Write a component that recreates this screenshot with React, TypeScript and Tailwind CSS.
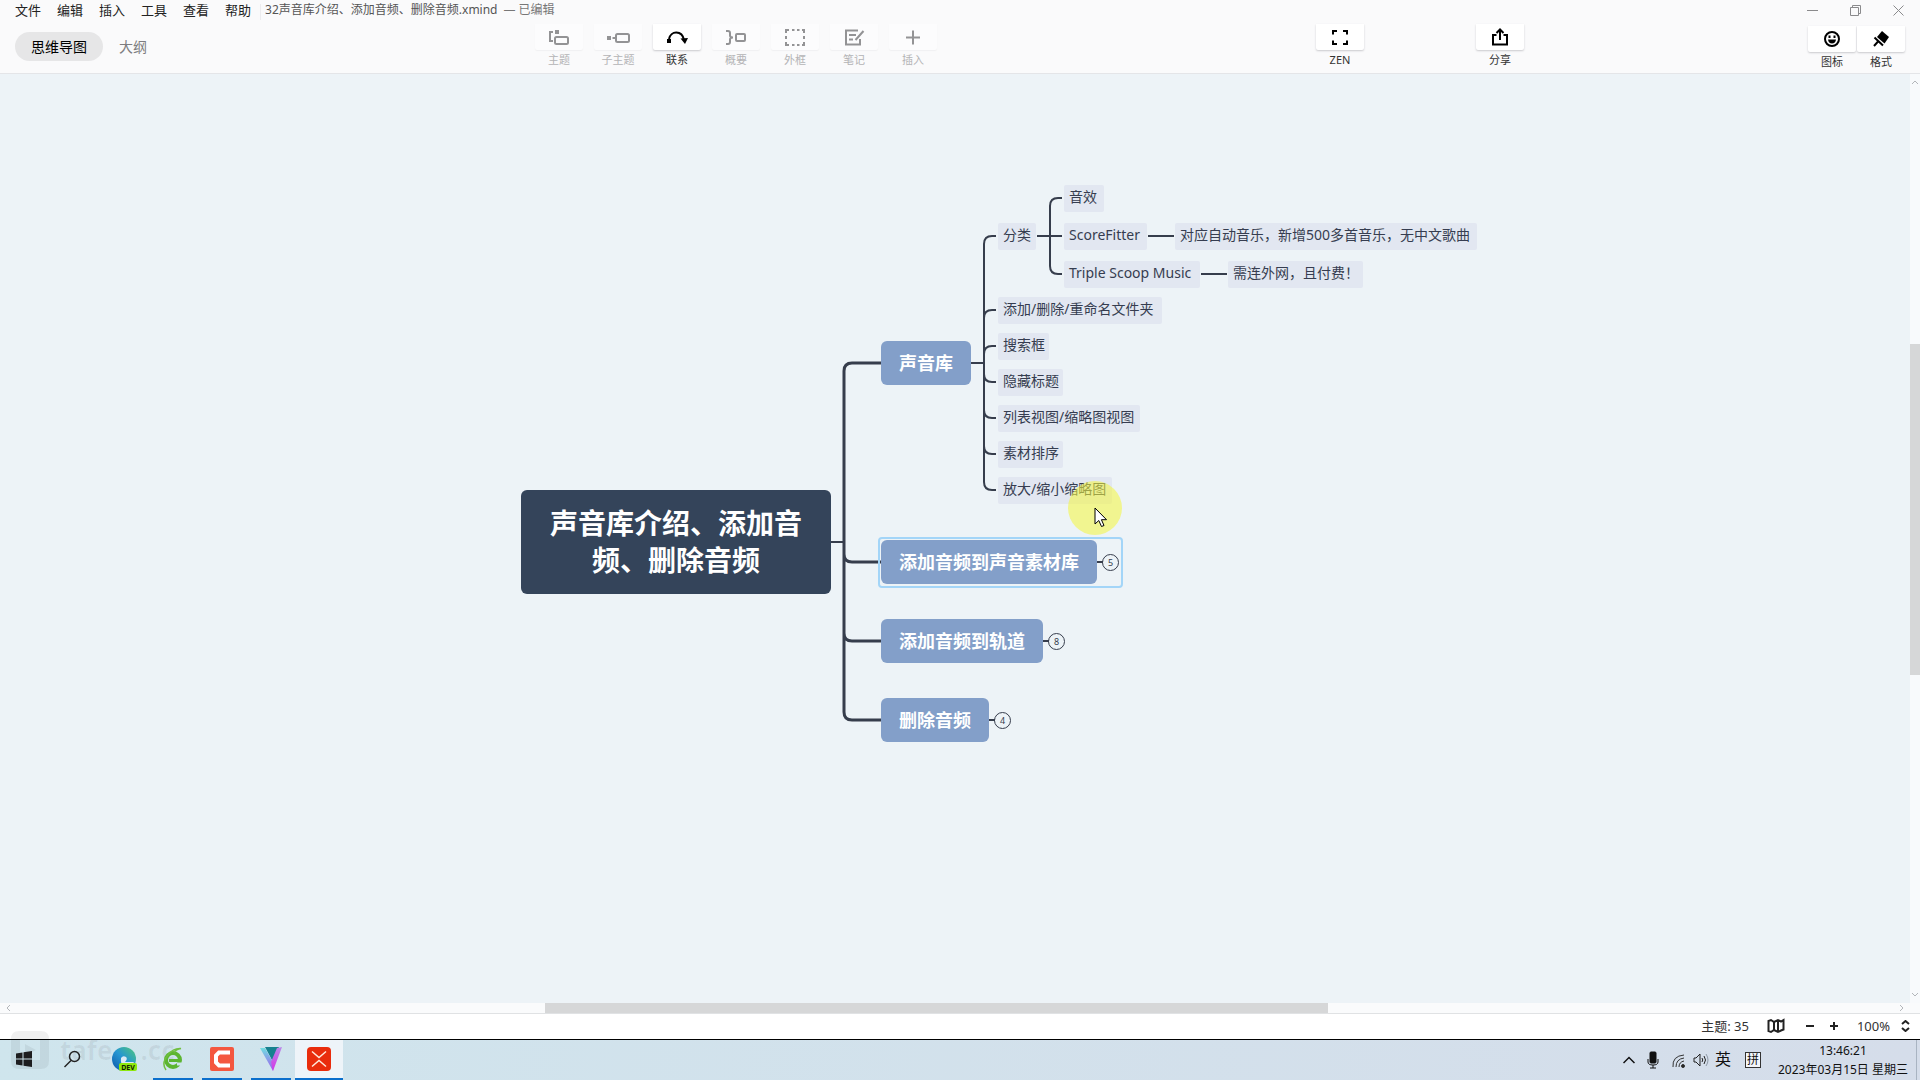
import type { ReactNode } from "react";
import clsx from "clsx";

type ToolProps = {
  label: string;
  children: ReactNode;
  disabled?: boolean;
};

const MENUS = ["文件", "编辑", "插入", "工具", "查看", "帮助"];

// centre line of every small topic is y
const TOPICS = [
  { text: "音效", x: 1064, y: 198, w: 40 },
  { text: "分类", x: 998, y: 236, w: 38 },
  { text: "ScoreFitter", x: 1064, y: 236, w: 83 },
  { text: "对应自动音乐，新增500多首音乐，无中文歌曲", x: 1175, y: 236, w: 302 },
  { text: "Triple Scoop Music", x: 1064, y: 274, w: 136 },
  { text: "需连外网，且付费！", x: 1228, y: 274, w: 135 },
  { text: "添加/删除/重命名文件夹", x: 998, y: 310, w: 164 },
  { text: "搜索框", x: 998, y: 346, w: 51 },
  { text: "隐藏标题", x: 998, y: 382, w: 65 },
  { text: "列表视图/缩略图视图", x: 998, y: 418, w: 142 },
  { text: "素材排序", x: 998, y: 454, w: 65 },
  { text: "放大/缩小缩略图", x: 998, y: 490, w: 114 },
];

const BRANCHES = [
  { text: "声音库", y: 363, w: 90 },
  { text: "添加音频到声音素材库", y: 562, w: 216, count: 5 },
  { text: "添加音频到轨道", y: 641, w: 162, count: 8 },
  { text: "删除音频", y: 720, w: 108, count: 4 },
];

const CANVAS_TOP = 74;

function Tool({ label, children, disabled }: ToolProps) {
  return (
    <button
      type="button"
      disabled={disabled}
      className={clsx(
        "flex w-12 flex-col items-center gap-0.5 text-[11px] leading-4",
        disabled ? "text-[#b4b4b6]" : "text-[#333333]",
      )}
    >
      <span
        className={clsx(
          "flex h-[26px] w-full items-center justify-center rounded-b-xs",
          disabled
            ? "bg-[#fcfcfd] text-[#939395] shadow-[0_1px_1px_#f0f0f2]"
            : "bg-white text-black shadow-[0_1px_2px_#c9c9cd]",
        )}
      >
        {children}
      </span>
      {label}
    </button>
  );
}

function Icon({ children, w = 22 }: { children: ReactNode; w?: number }) {
  return (
    <svg
      width={w}
      height="20"
      viewBox={`0 0 ${w} 20`}
      fill="none"
      stroke="currentColor"
      strokeWidth="2"
      aria-hidden="true"
    >
      {children}
    </svg>
  );
}

function TitleBar() {
  return (
    <div className="flex h-6 items-center pl-[15px] text-[13px] leading-5 text-[#222222]">
      <nav className="flex gap-4">
        {MENUS.map((m) => (
          <button key={m} type="button" className="pb-1">
            {m}
          </button>
        ))}
      </nav>
      <div className="ml-[9px] h-4 w-px bg-[#ececee]" />
      <span className="ml-1 pb-1 text-xs leading-5 text-[#555555]">
        32声音库介绍、添加音频、删除音频.xmind
      </span>
      <span className="ml-[6px] pb-1 text-xs leading-5 text-[#777777]">— 已编辑</span>
      <div className="ml-auto flex items-center gap-8 pr-4 pb-1 text-[#8a8a8c]">
        <button type="button" aria-label="最小化">
          <svg width="11" height="11" viewBox="0 0 11 11" stroke="currentColor">
            <path d="M0 5.5h11" />
          </svg>
        </button>
        <button type="button" aria-label="还原">
          <svg width="11" height="11" viewBox="0 0 11 11" fill="none" stroke="currentColor">
            <path d="M.5 2.5h8v8h-8zM2.5 2.5v-2h8v8h-2" />
          </svg>
        </button>
        <button type="button" aria-label="关闭">
          <svg width="11" height="11" viewBox="0 0 11 11" stroke="currentColor">
            <path d="M.5.5l10 10M10.5.5l-10 10" />
          </svg>
        </button>
      </div>
    </div>
  );
}

function Toolbar() {
  return (
    <div className="flex h-[49px] items-start">
      <div className="mt-2 ml-[15px] flex w-[519px] items-center text-sm leading-5">
        <button type="button" className="h-[29px] rounded-full bg-[#e6e6e7] px-4 text-black">
          思维导图
        </button>
        <button type="button" className="ml-4 text-[#7d7d80]">
          大纲
        </button>
      </div>
      <div className="ml-px flex gap-[11px]">
        <Tool label="主题" disabled>
          <Icon>
            <path d="M5 5H2v9h3" />
            <rect x="7" y="3" width="4" height="4" fill="currentColor" stroke="none" />
            <rect x="7" y="10" width="13" height="7" rx="1.5" />
          </Icon>
        </Tool>
        <Tool label="子主题" disabled>
          <Icon w={24}>
            <rect x="1" y="9" width="4" height="4" fill="currentColor" stroke="none" />
            <path d="M6.500 11h3" />
            <rect x="10" y="7" width="13" height="8" rx="1.5" />
          </Icon>
        </Tool>
        <Tool label="联系">
          <Icon>
            <path d="M3 12C4.500 3.500 16 3 18 13" />
            <rect x="1" y="12" width="4" height="4" fill="currentColor" stroke="none" />
            <path d="M14.500 11.500l7.500-.5-3 6z" fill="currentColor" stroke="none" />
          </Icon>
        </Tool>
        <Tool label="概要" disabled>
          <Icon>
            <path d="M1 4h2q2 0 2 2v2.500q0 2 3 2-3 0-3 2V15q0 2-2 2H1" />
            <rect x="11" y="7" width="9" height="7" rx="1" />
          </Icon>
        </Tool>
        <Tool label="外框" disabled>
          <Icon>
            <path d="M2 6V3h3M8 3h2.500M13 3h2.500M18 3h2v3M20 9v3M20 15v3h-2M15.500 18H13M10.500 18H8M5 18H2v-3M2 12V9" />
          </Icon>
        </Tool>
        <Tool label="笔记" disabled>
          <Icon>
            <path d="M15 3.500H3v14h14V12M6 8h7M6 12.500h4M20.500 4l-8 9" />
          </Icon>
        </Tool>
        <Tool label="插入" disabled>
          <Icon>
            <path d="M11 3.500v14M4 10.500h14" />
          </Icon>
        </Tool>
      </div>
      <div className="ml-[379px]">
        <Tool label="ZEN">
          <Icon w={20}>
            <path d="M3 7.500V4h4M13 4h4v3.500M17 13.500V17h-4M7 17H3v-3.500" />
          </Icon>
        </Tool>
      </div>
      <div className="ml-28">
        <Tool label="分享">
          <Icon w={20}>
            <path d="M6.500 8H3v9.500h14V8h-3.500M10 13V3M6.500 6L10 2.500 13.500 6" />
          </Icon>
        </Tool>
      </div>
      <div className="mt-[2px] mr-[15px] ml-auto flex gap-px">
        <Tool label="图标">
          <Icon w={20}>
            <circle cx="10" cy="10" r="7" />
            <path d="M6 10.500h8q-.5 4-4 4t-4-4z" fill="currentColor" stroke="none" />
            <path d="M7.500 6.500v2.500M12.500 6.500v2.500" />
          </Icon>
        </Tool>
        <Tool label="格式">
          <Icon w={20}>
            <path d="M11 2l7 6-4.500 6.500L6 8z" fill="currentColor" stroke="none" />
            <path d="M3.500 8.500l8.500 8M7.500 12L3 17" />
          </Icon>
        </Tool>
      </div>
    </div>
  );
}

function MindMap() {
  return (
    <main className="relative min-w-0 flex-1 overflow-hidden bg-[#edf3f7]">
      <svg className="absolute inset-0 h-full w-full" fill="none" stroke="#363d4c" aria-hidden="true">
        <g transform={`translate(0 ${-CANVAS_TOP})`}>
          <path
            strokeWidth="3"
            d="M881 363H852q-8 0-8 8V712q0 8 8 8h29M844 554q0 8 8 8h29M844 633q0 8 8 8h29"
          />
          <path
            strokeWidth="2"
            d="M831 542h13M971 363h13M996 236h-4q-8 0-8 8V482q0 8 8 8h4M984 318q0-8 8-8h4M984 354q0-8 8-8h4M984 374q0 8 8 8h4M984 410q0 8 8 8h4M984 446q0 8 8 8h4M1037 236h25M1062 198h-4q-8 0-8 8v60q0 8 8 8h4M1148 236h26M1201 274h26"
          />
          <path strokeWidth="2" d="M1097 562h6M1043 641h6M989 720h6" />
        </g>
      </svg>

      <h1 className="absolute top-[416px] left-[521px] flex h-[104px] w-[310px] items-center justify-center rounded-md bg-[#34445a] px-7 text-center text-[28px] leading-[37px] font-bold text-white">
        声音库介绍、添加音频、删除音频
      </h1>

      {TOPICS.map((t) => (
        <div
          key={t.text}
          className="absolute h-[27px] rounded-xs bg-[#e2e7f1] pt-0.5 pl-[5px] text-sm leading-5 whitespace-nowrap text-[#363d50]"
          style={{ left: t.x, top: t.y - CANVAS_TOP - 13, width: t.w }}
        >
          {t.text}
        </div>
      ))}

      <div className="absolute top-[463px] left-[878px] h-[51px] w-[245px] rounded-sm border-2 border-[#a3d5f8]" />
      {BRANCHES.map((b) => (
        <div key={b.text}>
          <div
            className="absolute left-[881px] flex h-11 items-center justify-center rounded-md bg-[#839fc9] text-lg leading-6 font-bold whitespace-nowrap text-white"
            style={{ top: b.y - CANVAS_TOP - 22, width: b.w }}
          >
            {b.text}
          </div>
          {b.count && (
            <button
              type="button"
              className="absolute flex size-[17px] items-center justify-center rounded-full border border-[#363d4c] text-[9px] leading-3 text-[#363d4c]"
              style={{ left: 881 + b.w + 5, top: b.y - CANVAS_TOP - 8 }}
            >
              {b.count}
            </button>
          )}
        </div>
      ))}

      {/* pointer with highlight */}
      <div className="absolute top-[407px] left-[1068px] size-[54px] rounded-full bg-[#f4f63c]/55" />
      <svg className="absolute top-[433px] left-[1094px]" width="14" height="21" viewBox="0 0 14 21">
        <path
          d="M1 1v16l3.800-3.500L7.500 19.500l2.500-1-2.600-5.800h5.100z"
          fill="white"
          stroke="black"
        />
      </svg>
    </main>
  );
}

function Chevron({ d }: { d: string }) {
  return (
    <svg width="8" height="8" viewBox="0 0 8 8" fill="none" stroke="#b3b6ba" aria-hidden="true">
      <path d={d} />
    </svg>
  );
}

function StatusBar() {
  return (
    <div className="flex h-[25px] items-center justify-end bg-white pr-[10px] pb-0.5 text-[13px] leading-5 text-[#333333]">
      <span>主题: 35</span>
      <button type="button" aria-label="导航" className="ml-[18px]">
        <svg width="18" height="16" viewBox="0 0 18 16" fill="none" stroke="#222" strokeWidth="2">
          <path d="M1.500 3v10l2.500 1 3-2 4 2 3-1.500 2.500-1V2L14 3.500 11 2 7 4 4 2zM7 4v8M11 2v12" />
        </svg>
      </button>
      <button type="button" aria-label="缩小" className="ml-5 h-5 w-[10px]">
        <svg width="10" height="10" viewBox="0 0 10 10" stroke="#222" strokeWidth="2">
          <path d="M1 5h8" />
        </svg>
      </button>
      <button type="button" aria-label="放大" className="ml-[14px] h-5 w-[10px]">
        <svg width="10" height="10" viewBox="0 0 10 10" stroke="#222" strokeWidth="2">
          <path d="M1 5h8M5 1v8" />
        </svg>
      </button>
      <button type="button" className="ml-[18px] flex items-center gap-[11px]">
        100%
        <svg width="9" height="12" viewBox="0 0 9 12" fill="none" stroke="#222" strokeWidth="2">
          <path d="M1 4l3.500-3L8 4M1 8l3.500 3L8 8" />
        </svg>
      </button>
    </div>
  );
}

function TaskItem({
  label,
  children,
  state,
}: {
  label: string;
  children: ReactNode;
  state?: "open" | "active";
}) {
  return (
    <button
      type="button"
      aria-label={label}
      className={clsx(
        "flex h-10 flex-col items-center justify-between",
        state === "active" && "bg-[#eef4f9]",
        state === "open" ? "w-[49px]" : "w-12",
      )}
    >
      <span className="flex h-[38px] items-center">{children}</span>
      {state && (
        <span className={clsx("h-0.5 bg-[#0b6fcc]", state === "active" ? "w-full" : "w-10")} />
      )}
    </button>
  );
}

function TaskBar() {
  return (
    <footer className="relative flex h-[41px] border-t border-black bg-linear-to-r from-[#cfe5ed] to-[#d5ddea]">
      <div className="absolute -top-[9px] left-[11px] flex items-center text-[26px] leading-9 font-bold text-black/6">
        <svg width="38" height="38" viewBox="0 0 38 38" fill="currentColor" aria-hidden="true">
          <path
            fillRule="evenodd"
            d="M8 0h22q8 0 8 8v22q0 8-8 8H8q-8 0-8-8V8q0-8 8-8zM9 9v20h20V9zM14 13l11 6-11 6z"
          />
        </svg>
        <span className="ml-[11px]">tafe</span>
        <span className="ml-7">.cc</span>
      </div>
      <div className="relative flex">
        <TaskItem label="开始">
          <svg width="16" height="16" viewBox="0 0 16 16" fill="#1d1d1f">
            <path d="M0 2.500l6.500-1v6H0zM7.500 1.300L16 0v7.500H7.500zM0 8.500h6.500v6L0 13.500zM7.500 8.500H16V16l-8.500-1.300z" />
          </svg>
        </TaskItem>
        <TaskItem label="搜索">
          <svg width="18" height="18" viewBox="0 0 18 18" fill="none" stroke="#222" strokeWidth="1.5">
            <circle cx="11.5" cy="6.5" r="5" />
            <path d="M8 10.500L1.500 17" />
          </svg>
        </TaskItem>
        <div className="w-1" />
        <TaskItem label="Edge Dev">
          <svg width="26" height="24" viewBox="0 0 26 24">
            <defs>
              <linearGradient id="edge" x1="0" y1="1" x2="1" y2="0">
                <stop offset="0" stopColor="#0b55a8" />
                <stop offset=".5" stopColor="#2596d2" />
                <stop offset="1" stopColor="#52c878" />
              </linearGradient>
            </defs>
            <circle cx="13" cy="12" r="12" fill="url(#edge)" />
            <path d="M10 11q2-3 5-1 2 2-1 5h9q-3 6-9 6-5-3-4-10z" fill="#dbe9f4" />
            <rect x="8" y="16" width="18" height="8" rx="2" fill="#8de80c" />
            <text x="17" y="22.5" textAnchor="middle" fontSize="7" fontWeight="700" fill="#122000">
              DEV
            </text>
          </svg>
        </TaskItem>
        <TaskItem label="浏览器" state="open">
          <svg width="22" height="24" viewBox="0 0 22 24" fill="none">
            <circle cx="11" cy="13" r="7" stroke="#5cb531" strokeWidth="4" />
            <path d="M7 13.500h12" stroke="#5cb531" strokeWidth="3" />
            <path d="M15 17h5" stroke="#cfe5ed" strokeWidth="3" />
            <path d="M4 23q-5-7 2-15Q11 1 19 1.500q-5 .5-7 4" stroke="#70bf3f" strokeWidth="1.5" />
          </svg>
        </TaskItem>
        <TaskItem label="Camtasia" state="open">
          <svg width="24" height="24" viewBox="0 0 24 24">
            <rect width="24" height="24" rx="2" fill="#f4573f" />
            <path d="M20 5.500H9l-3 3v7l3 3h11" fill="none" stroke="white" strokeWidth="4" />
          </svg>
        </TaskItem>
        <TaskItem label="VideoStudio" state="open">
          <svg width="22" height="24" viewBox="0 0 22 24">
            <defs>
              <linearGradient id="vs-left" x1="0" y1="0" x2="0" y2="1">
                <stop offset="0" stopColor="#6fdde0" />
                <stop offset="1" stopColor="#a35af0" />
              </linearGradient>
              <linearGradient id="vs-right" x1="0" y1="0" x2="0" y2="1">
                <stop offset="0" stopColor="#b98ae8" />
                <stop offset="1" stopColor="#d633e6" />
              </linearGradient>
            </defs>
            <path d="M5 0h14l-6 15z" fill="#16818f" />
            <path d="M0 1h5l9 16-1 7z" fill="url(#vs-left)" />
            <path d="M17 1l5-1-9 24-2-9z" fill="url(#vs-right)" />
          </svg>
        </TaskItem>
        <TaskItem label="XMind" state="active">
          <svg width="24" height="24" viewBox="0 0 24 24">
            <rect width="24" height="24" rx="4" fill="#e92c0c" />
            <path
              d="M5 4.500l7 6 7-6M5 19.500l7-6 7 6"
              fill="none"
              stroke="#ffe9dc"
              strokeWidth="1.5"
            />
          </svg>
        </TaskItem>
      </div>
      <div className="ml-auto flex items-center text-[#111111]">
        <svg width="12" height="8" viewBox="0 0 12 8" fill="none" stroke="currentColor" strokeWidth="1.5">
          <path d="M.5 7L6 1.500 11.500 7" />
        </svg>
        <svg className="ml-3" width="12" height="18" viewBox="0 0 12 18" fill="none" stroke="currentColor">
          <rect x="3" y="1" width="6" height="11" rx="1" fill="currentColor" />
          <path d="M1 8v3q0 3 5 3t5-3V8M6 14v3M3 17h6" />
        </svg>
        <svg className="ml-3" width="16" height="16" viewBox="0 0 16 16" fill="none" stroke="#333">
          <path d="M2 15Q1 4 13 3M5 15q0-8 8-9M8 15q0-5 5-6" />
          <circle cx="12" cy="14" r="1.5" fill="#222" />
        </svg>
        <svg className="ml-1.5" width="16" height="14" viewBox="0 0 16 14" fill="none" stroke="#222">
          <path d="M1 5h2l4-4v12L3 9H1z" />
          <path d="M9 5q1.500 2 0 4M11 3q3 4 0 8" />
          <path d="M13 1q4 6 0 12" stroke="#8f9aa8" />
        </svg>
        <span className="ml-1.5 pb-0.5 text-base leading-5">英</span>
        <span className="ml-[14px] flex size-4 items-center justify-center border border-[#333333] bg-[#f4f6fa] text-xs leading-4">
          拼
        </span>
        <div className="ml-[17px] pb-px text-center text-xs leading-[19px]">
          <div>13:46:21</div>
          <div>2023年03月15日 星期三</div>
        </div>
        <div className="ml-2 h-10 w-1 border-l border-[#a9b4c2]" />
      </div>
    </footer>
  );
}

export default function App() {
  return (
    <div className="flex h-screen flex-col overflow-hidden bg-[#fafafb] font-['Noto_Sans','Noto_Sans_CJK_SC',sans-serif]">
      <header className="border-b border-[#e4e5e8]">
        <TitleBar />
        <Toolbar />
      </header>
      <div className="flex min-h-0 flex-1">
        <MindMap />
        <div className="flex w-[10px] flex-col items-center bg-[#f8fafc] py-1">
          <Chevron d="M1 6l3-3 3 3" />
          <div className="mt-[258px] h-[331px] w-full bg-[#d6d7d8]" />
          <div className="mt-auto">
            <Chevron d="M1 2l3 3 3-3" />
          </div>
        </div>
      </div>
      <div className="flex h-[11px] items-center border-b border-[#e0e2e4] bg-[#fafbfc] pl-1">
        <Chevron d="M6 1L3 4l3 3" />
        <div className="ml-[533px] h-[10px] w-[783px] bg-[#d6d7d8]" />
        <div className="mr-[14px] ml-auto">
          <Chevron d="M2 1l3 3-3 3" />
        </div>
      </div>
      <StatusBar />
      <TaskBar />
    </div>
  );
}
